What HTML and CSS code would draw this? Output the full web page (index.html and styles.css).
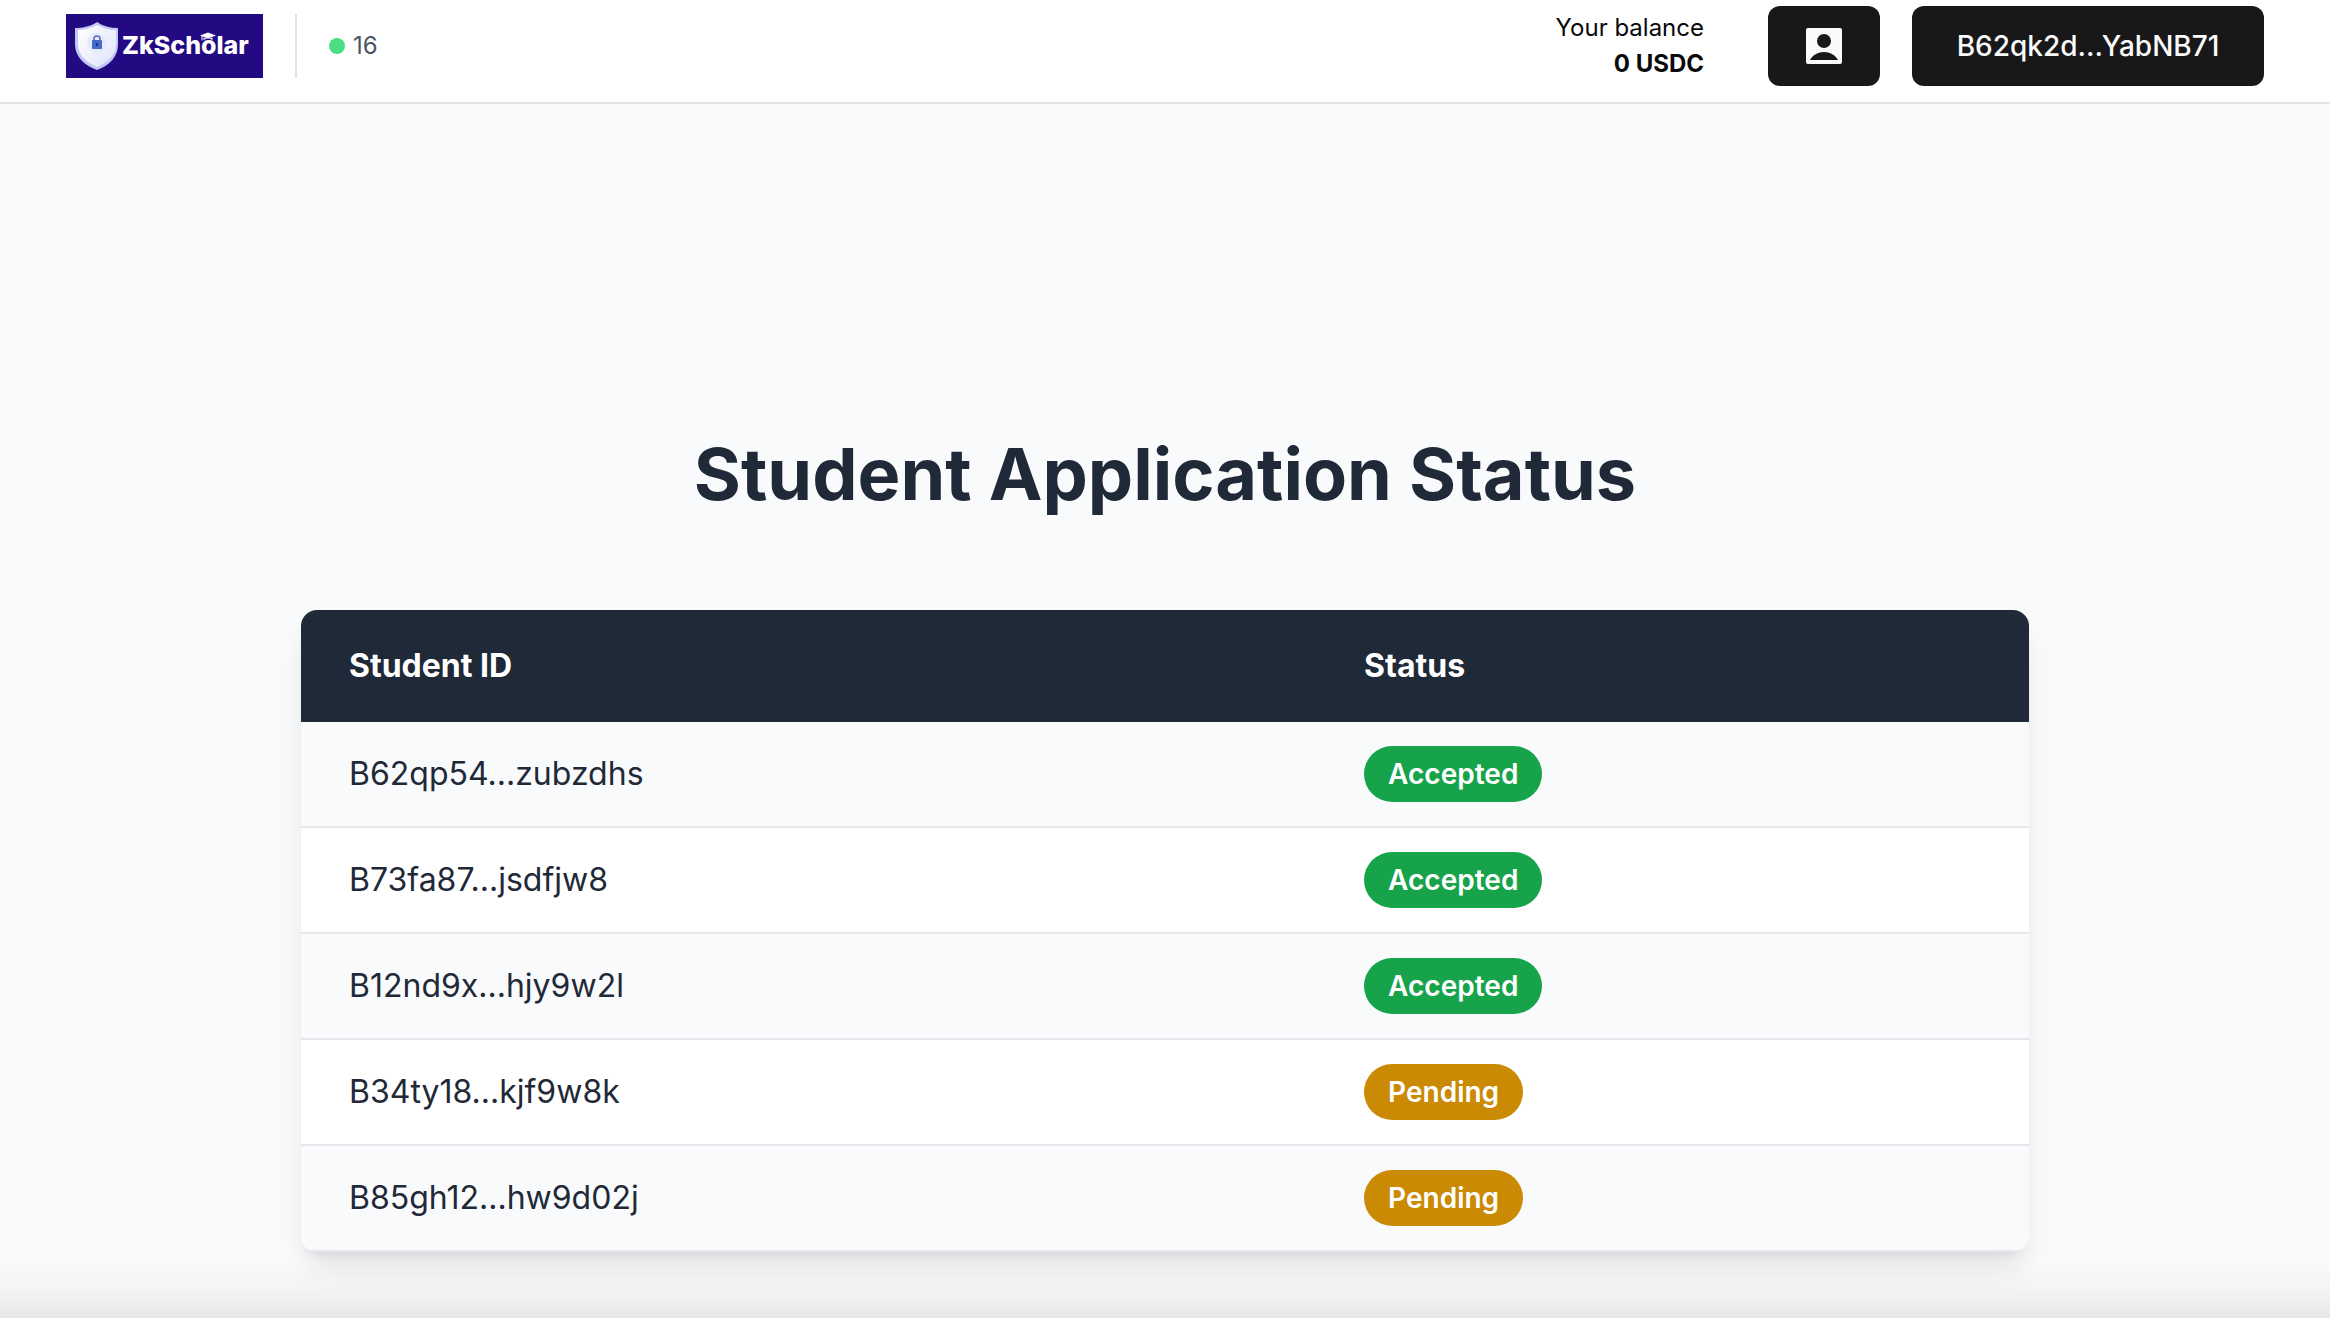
FILE: index.html
```html
<!DOCTYPE html>
<html lang="en">
<head>
<meta charset="utf-8">
<meta name="viewport" content="width=device-width, initial-scale=1">
<title>ZkScholar</title>
<link rel="stylesheet" href="styles.css">
</head>
<body>
<header class="topbar">
  <div class="brand">
    <a class="logo" href="#" aria-label="ZkScholar">
      <svg class="logo-art" viewBox="0 0 197 64" aria-hidden="true">
        <defs>
          <linearGradient id="shield" x1="0" y1="0" x2="1" y2="1">
            <stop offset="0" stop-color="#ffffff"/>
            <stop offset="1" stop-color="#dfe3f8"/>
          </linearGradient>
        </defs>
        <path d="M31 8C25 12 17 14 9 14V30C9 43 18 51 31 56C44 51 52 43 52 30V14C44 14 37 12 31 8Z" fill="#c3c7f5"/>
        <path d="M31 11C25 14 18 16 12 16V30C12 41 20 48 31 53C42 48 50 41 50 30V16C43 16 37 14 31 11Z" fill="url(#shield)"/>
        <circle cx="31" cy="29" r="10" fill="#e6ebfb"/>
        <path d="M28 27V25a3 3 0 0 1 6 0V27" fill="none" stroke="#5a68b8" stroke-width="1.5"/>
        <rect x="26" y="26" width="10" height="9" rx="1" fill="#4668c8"/>
        <path d="M31 29v3" stroke="#24308c" stroke-width="2"/>
        <text class="logo-text" x="56" y="40">ZkScholar</text>
        <path d="M142 18.500L150 21.500L142 24.500L134 21.500Z" fill="#fff"/>
        <path d="M137.500 23.500V26Q142 23.500 146.500 26V23.500L142 25Z" fill="#fff"/>
        <path d="M136 22V26.500" stroke="#fff" stroke-width="1"/>
      </svg>
    </a>
    <div class="divider"></div>
    <div class="block"><span class="dot"></span><span>16</span></div>
  </div>
  <div class="account">
    <div class="balance"><span>Your balance</span><strong>0 USDC</strong></div>
    <button class="btn btn-icon" type="button" aria-label="Profile">
      <svg width="48" height="48" viewBox="0 0 24 24" fill="currentColor" aria-hidden="true"><path d="M4 3h16a1 1 0 0 1 1 1v16a1 1 0 0 1-1 1H4a1 1 0 0 1-1-1V4a1 1 0 0 1 1-1zm8 3a3.500 3.500 0 1 0 0 7 3.500 3.500 0 0 0 0-7zM5 19h14c-1.300-2.500-4-4-7-4s-5.700 1.500-7 4z" fill-rule="evenodd"/></svg>
    </button>
    <button class="btn btn-wallet" type="button">B62qk2d...YabNB71</button>
  </div>
</header>
<main class="page">
  <h1 class="title">Student Application Status</h1>
  <div class="card">
    <table class="students">
      <thead><tr><th scope="col">Student ID</th><th scope="col">Status</th></tr></thead>
      <tbody>
        <tr><td>B62qp54...zubzdhs</td><td><span class="badge accepted">Accepted</span></td></tr>
        <tr><td>B73fa87...jsdfjw8</td><td><span class="badge accepted">Accepted</span></td></tr>
        <tr><td>B12nd9x...hjy9w2l</td><td><span class="badge accepted">Accepted</span></td></tr>
        <tr><td>B34ty18...kjf9w8k</td><td><span class="badge pending">Pending</span></td></tr>
        <tr><td>B85gh12...hw9d02j</td><td><span class="badge pending">Pending</span></td></tr>
      </tbody>
    </table>
  </div>
</main>
</body>
</html>
```
FILE: styles.css
```css
* {
  box-sizing: border-box;
}

body {
  margin: 0;
  min-height: 100vh;
  display: flex;
  flex-direction: column;
  font-family: Inter, "Liberation Sans", sans-serif;
  color: #1f2937;
  background: #f9fafc;
}

/* Header */
.topbar {
  display: flex;
  justify-content: space-between;
  align-items: flex-start;
  padding: 6px 66px 16px;
  background: #fff;
  border-bottom: 2px solid #e2e4e8;
}

.brand,
.account {
  display: flex;
  align-items: center;
  gap: 32px;
  height: 80px;
}

.logo {
  display: block;
  width: 197px;
  height: 64px;
  background: #230a82;
}

.logo-art {
  display: block;
  width: 100%;
  height: 100%;
}

.logo-text {
  font-size: 25px;
  font-weight: 800;
  fill: #fff;
}

.divider {
  width: 2px;
  height: 64px;
  background: #e2e4e8;
}

.block {
  display: flex;
  align-items: center;
  gap: 8px;
  font-size: 24px;
  line-height: 32px;
  color: #4b5563;
}

.dot {
  width: 16px;
  height: 16px;
  border-radius: 50%;
  background: #4ade80;
}

.balance {
  display: flex;
  flex-direction: column;
  align-items: flex-end;
  margin-right: 32px;
  font-size: 24px;
  line-height: 36px;
  color: #09090b;
}

.balance strong {
  font-weight: 700;
}

.btn {
  display: flex;
  align-items: center;
  justify-content: center;
  height: 80px;
  padding: 0 32px;
  border: 0;
  border-radius: 12px;
  font: 500 28px/40px Inter, "Liberation Sans", sans-serif;
  color: #fafafa;
  background: #18181b;
  cursor: pointer;
}

.btn-wallet {
  min-width: 352px;
}

/* Application list */
.page {
  flex: 1;
  padding: 330px 32px 64px;
  background: linear-gradient(to top, #e6e7e9, #f3f4f6 50%, #f9fafc) bottom / 100% 56px no-repeat;
}

.title {
  margin: 0 0 96px;
  font-size: 72px;
  line-height: 80px;
  font-weight: 700;
  text-align: center;
}

.card {
  max-width: 1728px;
  margin: 0 auto;
  overflow: hidden;
  border-radius: 16px;
  background: #fff;
  box-shadow: 0 20px 30px -6px rgb(0 0 0 / 0.1), 0 8px 12px -8px rgb(0 0 0 / 0.1);
}

.students {
  width: 100%;
  border-collapse: collapse;
  font-size: 32px;
  line-height: 48px;
  text-align: left;
}

.students th {
  padding: 32px 48px;
  font-weight: 700;
  color: #fff;
  background: #1f2937;
}

.students td {
  padding: 24px 48px;
}

.students tbody tr {
  border-bottom: 2px solid #e5e7eb;
}

.students tbody tr:nth-child(odd) {
  background: #f9fafc;
}

.badge {
  display: block;
  width: fit-content;
  padding: 8px 24px;
  border-radius: 28px;
  font-size: 28px;
  line-height: 40px;
  font-weight: 600;
  color: #fff;
}

.accepted {
  background: #16a34a;
}

.pending {
  background: #ca8a04;
}
```
